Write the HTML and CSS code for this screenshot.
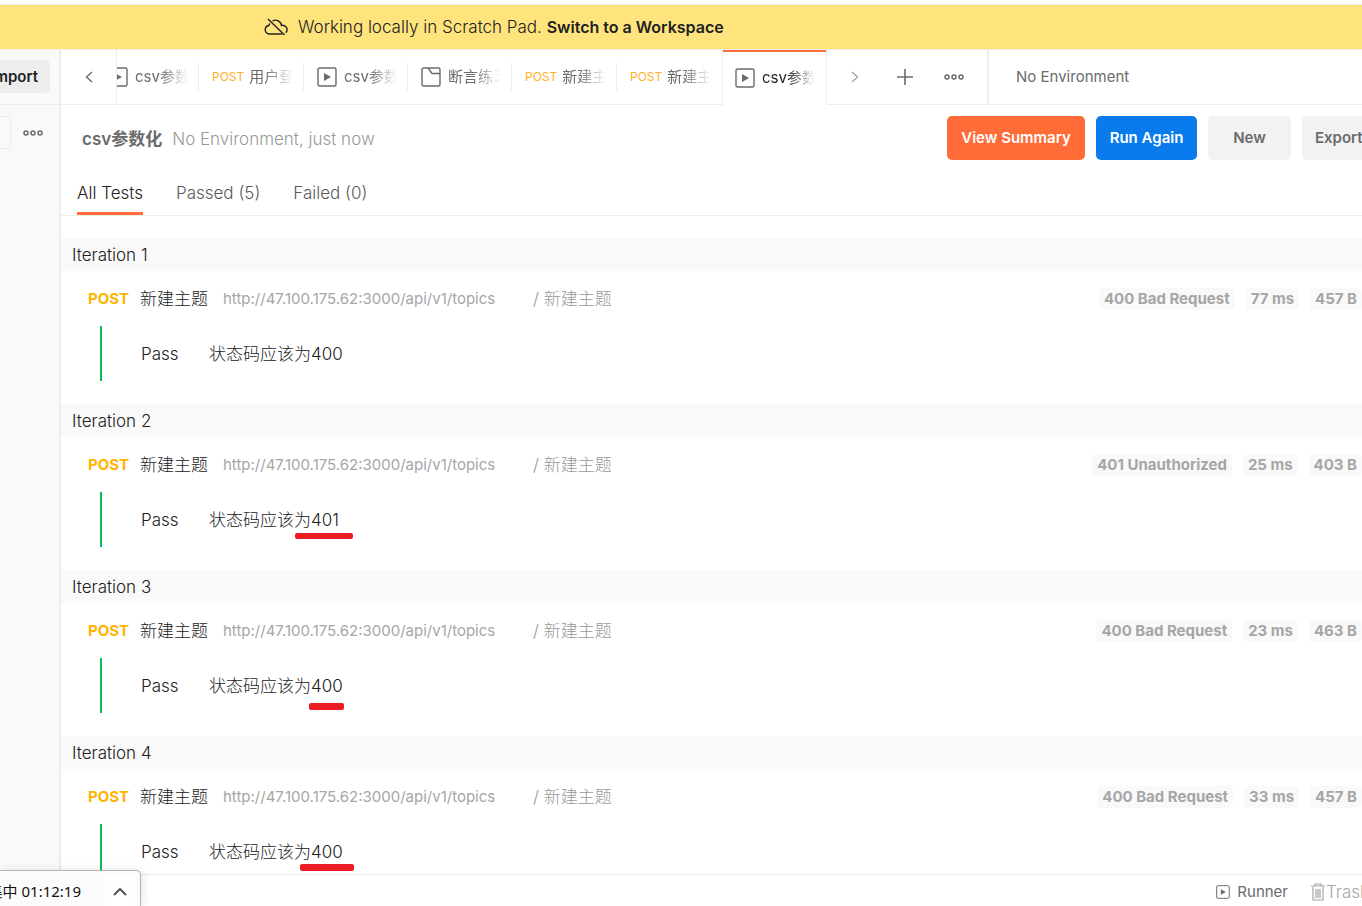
FILE: index.html
```html
<!DOCTYPE html>
<html lang="zh-CN">
<head>
<meta charset="utf-8">
<title>csv参数化</title>
<link rel="stylesheet" href="styles.css">
</head>
<body>
<svg class="defs" aria-hidden="true">
  <symbol id="i-runner" viewBox="0 0 20 20"><rect x="1" y="1" width="18" height="18" rx="1.5" fill="none" stroke="currentColor" stroke-width="1.4"/><path d="M7 6v8l7-4z" fill="currentColor"/></symbol>
  <symbol id="i-folder" viewBox="0 0 20 20"><path d="M2.500 1H7L11 6.500H19V17.500Q19 19 17.500 19h-15Q1 19 1 17.500V2.500Q1 1 2.500 1zM7 1h10.500Q19 1 19 2.500V7" fill="none" stroke="currentColor" stroke-width="1.400"/></symbol>
  <symbol id="i-dots" viewBox="0 0 20 6"><g fill="none" stroke="currentColor" stroke-width="1.500"><circle cx="3" cy="3" r="2"/><circle cx="10" cy="3" r="2"/><circle cx="17" cy="3" r="2"/></g></symbol>
</svg>

<div class="banner">
  <svg class="cloud" viewBox="0 0 24 18" aria-hidden="true"><g fill="none" stroke="currentColor" stroke-width="1.400"><path d="M6 5.500A4.500 4.500 0 0 0 4.800 7.500 4.300 4.300 0 0 0 5 16H18M8.500 3A6 6 0 0 1 17.500 7.500a4.300 4.300 0 0 1 4.200 7.200"/><path d="M4 1 20.500 17"/></g></svg>
  <p>Working locally in Scratch Pad. <a href="#">Switch to a Workspace</a></p>
</div>

<div class="app">
  <aside class="sidebar">
    <div class="side-top"><button class="import">Import</button></div>
    <div class="side-tools">
      <input class="filter" type="text" aria-label="Filter">
      <button class="icon-btn" aria-label="More"><svg class="dots"><use href="#i-dots"/></svg></button>
    </div>
  </aside>

  <main class="main">
    <div class="topbar">
      <button class="prev" aria-label="Previous tabs"><svg class="chev" viewBox="0 0 8 12"><path d="M7 1 1.500 6 7 11" fill="none" stroke="currentColor" stroke-width="1.400"/></svg></button>
      <nav class="tabs">
        <a class="tab" href="#"><svg class="tab-icon"><use href="#i-runner"/></svg><span class="name">csv参数化</span></a>
        <a class="tab request" href="#"><span class="verb">POST</span><span class="name">用户登录</span></a>
        <a class="tab" href="#"><svg class="tab-icon"><use href="#i-runner"/></svg><span class="name">csv参数化</span></a>
        <a class="tab" href="#"><svg class="tab-icon"><use href="#i-folder"/></svg><span class="name">断言练习</span></a>
        <a class="tab request" href="#"><span class="verb">POST</span><span class="name">新建主题</span></a>
        <a class="tab request last" href="#"><span class="verb">POST</span><span class="name">新建主题</span></a>
        <a class="tab active" href="#"><svg class="tab-icon"><use href="#i-runner"/></svg><span class="name">csv参数化</span></a>
      </nav>
      <div class="tab-tools">
        <button class="icon-btn next" aria-label="Next tabs"><svg class="chev" viewBox="0 0 8 12"><path d="M1 1 6.500 6 1 11" fill="none" stroke="currentColor" stroke-width="1.400"/></svg></button>
        <button class="icon-btn add" aria-label="New tab"><svg class="plus" viewBox="0 0 18 18"><path d="M9 1v16M1 9h16" stroke="currentColor" stroke-width="1.600"/></svg></button>
        <button class="icon-btn" aria-label="Tab options"><svg class="dots"><use href="#i-dots"/></svg></button>
      </div>
      <button class="environment">No Environment</button>
    </div>

    <header class="run-head">
      <h1>csv参数化</h1>
      <p>No Environment, just now</p>
      <div class="actions">
        <button class="btn summary">View Summary</button>
        <button class="btn again">Run Again</button>
        <button class="btn new">New</button>
        <button class="btn export">Export</button>
      </div>
    </header>

    <nav class="filters">
      <a class="on" href="#">All Tests</a>
      <a href="#">Passed (5)</a>
      <a href="#">Failed (0)</a>
    </nav>

    <div class="results">
      <section>
        <h2>Iteration 1</h2>
        <div class="req"><b>POST</b><span class="req-name">新建主题</span><span class="url">http://47.100.175.62:3000/api/v1/topics</span><span class="path">/ 新建主题</span><span class="pill first">400 Bad Request</span><span class="pill">77 ms</span><span class="pill">457 B</span></div>
        <div class="test"><span class="state">Pass</span><span>状态码应该为400</span></div>
      </section>
      <section>
        <h2>Iteration 2</h2>
        <div class="req"><b>POST</b><span class="req-name">新建主题</span><span class="url">http://47.100.175.62:3000/api/v1/topics</span><span class="path">/ 新建主题</span><span class="pill first">401 Unauthorized</span><span class="pill">25 ms</span><span class="pill">403 B</span></div>
        <div class="test"><span class="state">Pass</span><span>状态码应该为401</span><i class="mark mark-a"></i></div>
      </section>
      <section>
        <h2>Iteration 3</h2>
        <div class="req"><b>POST</b><span class="req-name">新建主题</span><span class="url">http://47.100.175.62:3000/api/v1/topics</span><span class="path">/ 新建主题</span><span class="pill first">400 Bad Request</span><span class="pill">23 ms</span><span class="pill">463 B</span></div>
        <div class="test"><span class="state">Pass</span><span>状态码应该为400</span><i class="mark mark-b"></i></div>
      </section>
      <section>
        <h2>Iteration 4</h2>
        <div class="req"><b>POST</b><span class="req-name">新建主题</span><span class="url">http://47.100.175.62:3000/api/v1/topics</span><span class="path">/ 新建主题</span><span class="pill first">400 Bad Request</span><span class="pill">33 ms</span><span class="pill">457 B</span></div>
        <div class="test"><span class="state">Pass</span><span>状态码应该为400</span><i class="mark mark-c"></i></div>
      </section>
    </div>

    <footer class="status">
      <button class="runner"><svg class="run-icon"><use href="#i-runner"/></svg>Runner</button>
      <button class="trash"><svg class="bin" viewBox="0 0 14 18"><path d="M0 3h14M4 3V1h6v2M2 4v13h10V4M5 6v9M7 6v9M9 6v9" fill="none" stroke="currentColor" stroke-width="1.200"/></svg>Trash</button>
    </footer>
  </main>
</div>

<div class="recorder"><span class="clock">采集中 01:12:19</span><button aria-label="Expand"><svg viewBox="0 0 14 9"><path d="M1 8 7 2l6 6" fill="none" stroke="currentColor" stroke-width="2"/></svg></button></div>
</body>
</html>
```
FILE: styles.css
```css
* { box-sizing: border-box; }
body {
  margin: 0;
  height: 100vh;
  display: flex;
  flex-direction: column;
  overflow: hidden;
  position: relative;
  padding-top: 4px;
  background: #fff;
  color: #212121;
  font: 300 17px/24px Inter, "Noto Sans CJK SC", sans-serif;
  white-space: nowrap;
}
button { font: inherit; color: inherit; border: 0; padding: 0; background: none; }
a { color: inherit; text-decoration: none; }
h1, h2, p { margin: 0; }
svg { display: block; flex: none; }
.defs { display: none; }

.banner {
  flex: none;
  height: 46px;
  display: flex;
  align-items: center;
  gap: 10px;
  padding-left: 264px;
  background: #ffe47e;
  border-top: 1px solid #ededed;
  border-bottom: 1px solid #ededed;
}
.banner a { font-size: 16px; font-weight: 600; }
.cloud { width: 24px; height: 18px; }

.app { flex: 1; min-height: 0; display: flex; }
.sidebar {
  flex: none;
  width: 61px;
  background: #f9f9f9;
  border-right: 2px solid #ededed;
  overflow: hidden;
}
.side-top {
  height: 55px;
  padding: 10px 9px 0 0;
  display: flex;
  justify-content: flex-end;
  border-bottom: 1px solid #ededed;
}
.import {
  flex: none;
  height: 33px;
  padding: 0 12px;
  border-radius: 5px;
  background: #ededed;
  font-size: 15px;
  font-weight: 600;
}
.side-tools { display: flex; align-items: center; gap: 12px; padding-top: 11px; }
.filter {
  width: 11px;
  height: 33px;
  padding: 0;
  border: 1px solid #ededed;
  border-left: 0;
  border-radius: 0 3px 3px 0;
  background: #f9f9f9;
}
.icon-btn { color: #6b6b6b; display: flex; align-items: center; justify-content: center; }
.dots { width: 20px; height: 6px; }
.chev { width: 8px; height: 12px; }

.main { flex: 1; min-width: 0; display: flex; flex-direction: column; overflow: hidden; }
.topbar { flex: none; height: 55px; display: flex; }
.prev {
  flex: none;
  width: 56px;
  display: flex;
  align-items: center;
  justify-content: center;
  border-right: 1px solid #ededed;
  border-bottom: 1px solid #ededed;
  color: #6b6b6b;
}
.tabs { flex: none; width: 710px; display: flex; justify-content: flex-end; overflow: hidden; }
.tab {
  flex: none;
  width: 104px;
  display: flex;
  align-items: center;
  gap: 7px;
  padding-left: 13px;
  border-bottom: 1px solid #ededed;
  background: linear-gradient(#ededed, #ededed) right center / 1px 28px no-repeat;
  color: #6b6b6b;
  font-size: 15px;
  font-weight: 400;
}
.request { width: 105px; gap: 5px; }
.last { background: none; }
.active {
  width: 105px;
  padding-left: 12px;
  border: 1px solid #ededed;
  border-width: 0 1px;
  background: linear-gradient(#ff6c37, #ff6c37) top / 100% 2px no-repeat;
  color: #212121;
}
.tab-icon { width: 20px; height: 20px; color: #6b6b6b; }
.name { flex: 1; overflow: hidden; margin-right: 11px; -webkit-mask: linear-gradient(to left, transparent, #000 28px); mask: linear-gradient(to left, transparent, #000 28px); }
.verb { color: #ffb024; font-size: 12px; }
.tab-tools {
  flex: none;
  width: 162px;
  display: flex;
  align-items: center;
  padding: 0 23px 0 24px;
  border-right: 2px solid #ededed;
  border-bottom: 1px solid #ededed;
}
.next { color: #a6a6a6; }
.add { margin: 0 auto; padding-left: 6px; }
.plus { width: 18px; height: 18px; }
.environment {
  flex: 1;
  padding-left: 27px;
  text-align: left;
  font-size: 15px;
  font-weight: 400;
  color: #6b6b6b;
  border-bottom: 1px solid #ededed;
}

.run-head { flex: none; display: flex; align-items: center; gap: 10px; padding: 11px 0 11px 21px; color: #999; }
.run-head h1, .run-head p { padding-top: 2px; }
.run-head h1 { font-size: 17px; font-weight: 600; color: #6b6b6b; }
.actions { flex: none; display: flex; gap: 11px; margin-left: auto; }
.btn {
  height: 44px;
  border-radius: 5px;
  background: #f2f2f2;
  color: #6b6b6b;
  font-size: 15px;
  font-weight: 600;
}
.summary { width: 138px; background: #ff6c37; color: #fff; }
.again { width: 101px; background: #097bed; color: #fff; }
.new { width: 83px; }
.export { width: 60px; padding-left: 13px; overflow: hidden; text-align: left; border-radius: 5px 0 0 5px; }

.filters {
  flex: none;
  height: 45px;
  display: flex;
  gap: 33px;
  padding-left: 16px;
  border-bottom: 1px solid #ededed;
  color: #5a5a5a;
}
.filters a { padding-top: 10px; border-bottom: 3px solid transparent; }
.filters .on { color: #212121; border-color: #ff6c37; }

.results { flex: 1; min-height: 0; overflow: hidden; padding-top: 22px; }
.results section { padding-bottom: 23px; }
.results h2 { padding: 2px 11px 0; background: #f9f9f9; font-size: 17px; font-weight: 300; line-height: 31px; color: #212121; }
.req { display: flex; align-items: center; height: 55px; padding-left: 27px; font-size: 15px; font-weight: 400; color: #a6a6a6; }
.req b { width: 52px; color: #ffb400; font-weight: 700; }
.req-name { width: 83px; color: #212121; font-size: 17px; font-weight: 300; }
.url { width: 310px; }
.path { font-size: 17px; font-weight: 300; color: #999; }
.pill { margin-left: 11px; padding: 0 5px; border-radius: 5px; background: #f9f9f9; font-weight: 700; line-height: 22px; }
.first { margin-left: auto; }
.test {
  position: relative;
  display: flex;
  align-items: center;
  height: 55px;
  margin-left: 39px;
  padding-left: 39px;
  border-left: 2px solid #0cbb52;
  color: #212121;
}
.state { width: 68px; }
.mark { position: absolute; height: 7px; border-radius: 2px; background: #ed1c24; }
.mark-a { left: 193px; top: 41px; width: 58px; height: 6px; }
.mark-b { left: 207px; top: 45px; width: 35px; }
.mark-c { left: 198px; top: 40px; width: 54px; }

.status {
  flex: none;
  height: 32px;
  display: flex;
  justify-content: flex-end;
  gap: 23px;
  border-top: 1px solid #ededed;
  background: #fff;
  color: #6b6b6b;
}
.status button { display: flex; align-items: center; padding-top: 2px; font-size: 15px; font-weight: 400; }
.runner { gap: 7px; }
.run-icon { width: 14px; height: 14px; }
.status .trash { width: 51px; gap: 1px; overflow: hidden; color: #a6a6a6; font-size: 17px; font-weight: 300; }
.bin { width: 14px; height: 18px; }

.recorder {
  position: absolute;
  left: 0;
  bottom: 0;
  width: 141px;
  height: 36px;
  display: flex;
  align-items: center;
  padding-top: 5px;
  border: 1px solid #b5b5b5;
  border-width: 1px 1px 0 0;
  border-radius: 0 5px 0 0;
  background: #fbfbfb;
  box-shadow: 2px 0 8px rgba(0, 0, 0, .1);
  color: #111;
  font: 15px/24px "Noto Sans", "Noto Sans CJK SC", sans-serif;
}
.clock { width: 81px; display: flex; justify-content: flex-end; overflow: hidden; }
.recorder button { width: 30px; height: 30px; margin-left: 24px; background: #fff; color: #555; display: flex; align-items: center; justify-content: center; }
.recorder svg { width: 14px; height: 9px; }
```
